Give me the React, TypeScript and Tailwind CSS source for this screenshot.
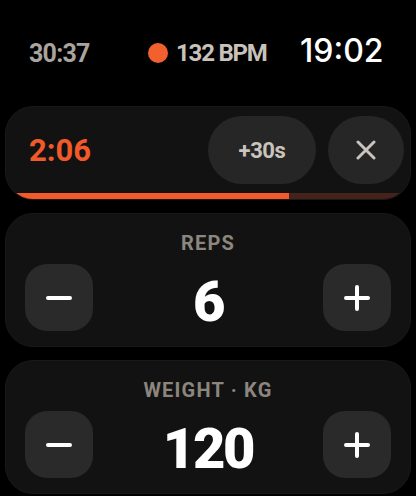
import React from "react";

const font = { fontFamily: "Roboto, 'Noto Sans', sans-serif" };

const MinusIcon = () => (
  <svg width="26" height="26" viewBox="0 0 26 26" fill="none">
    <path d="M2 13h22" stroke="white" strokeWidth="4" strokeLinecap="round" />
  </svg>
);

const PlusIcon = () => (
  <svg width="26" height="26" viewBox="0 0 26 26" fill="none">
    <path
      d="M2 13h22M13 2v22"
      stroke="white"
      strokeWidth="4"
      strokeLinecap="round"
    />
  </svg>
);

const Stepper = ({ label, value }: { label: string; value: string }) => (
  <div className="mx-[5px] rounded-[28px] border border-[#191919] bg-[#121212] px-[19px] pt-[19px] pb-[15px]">
    <div className="text-center text-[20px] leading-[20px] font-bold tracking-[0.06em] text-[#8c867f]">
      {label}
    </div>
    <div className="mt-[11px] flex items-center justify-between">
      <button className="flex h-[67px] w-[68px] items-center justify-center rounded-[22px] bg-[#2a2a2a]">
        <MinusIcon />
      </button>
      <div className="pt-2 text-[56px] leading-[56px] font-black tracking-[-0.04em] text-white">
        {value}
      </div>
      <button className="flex h-[67px] w-[68px] items-center justify-center rounded-[22px] bg-[#2a2a2a]">
        <PlusIcon />
      </button>
    </div>
  </div>
);

export default function App() {
  const progress = 70;

  return (
    <div className="h-[496px] w-[416px] overflow-hidden bg-black" style={font}>
      {/* status bar */}
      <div className="flex h-[106px] items-center pb-[4px] pl-[29px]">
        <span className="w-[119px] pt-[4px] text-[25px] leading-[25px] font-bold tracking-[-0.03em] text-[#a9a49e]">
          30:37
        </span>
        <span className="flex w-[152px] items-center gap-[8px] pt-[4px]">
          <span className="h-[20px] w-[20px] rounded-full bg-[#f2602d]" />
          <span className="text-[24px] leading-[24px] font-bold tracking-[-0.05em] text-[#c8c2bb]">
            132 BPM
          </span>
        </span>
        <span
          className="text-[32px] leading-[32px] font-medium text-white"
          style={{ fontFamily: "Inter, sans-serif" }}
        >
          19:02
        </span>
      </div>

      {/* rest timer */}
      <div className="mx-[5px] flex h-[94px] flex-col overflow-hidden rounded-[28px] border border-[#191919] bg-[#121212]">
        <div className="flex items-center pt-[9px] pr-[6px] pl-[23px]">
          <span className="flex-1 text-[31px] leading-[31px] font-bold text-[#f15a29]">
            2:06
          </span>
          <button className="flex h-[68px] w-[108px] items-center justify-center rounded-full bg-[#262626] text-[22px] font-bold tracking-[-0.02em] text-[#c9c4bd]">
            +30s
          </button>
          <button className="ml-[12px] flex h-[68px] w-[76px] items-center justify-center rounded-full bg-[#262626]">
            <svg width="20" height="20" viewBox="0 0 20 20" fill="none">
              <path
                d="M2 2l16 16M18 2L2 18"
                stroke="#c9c4bd"
                strokeWidth="3"
                strokeLinecap="round"
              />
            </svg>
          </button>
        </div>
        <div className="mt-auto flex h-[6px] bg-[#45231a]">
          <div className="h-full bg-[#f15a29]" style={{ width: `${progress}%` }} />
        </div>
      </div>

      <div className="mt-[13px] flex flex-col gap-[13px]">
        <Stepper label="REPS" value="6" />
        <Stepper label="WEIGHT · KG" value="120" />
      </div>
    </div>
  );
}
